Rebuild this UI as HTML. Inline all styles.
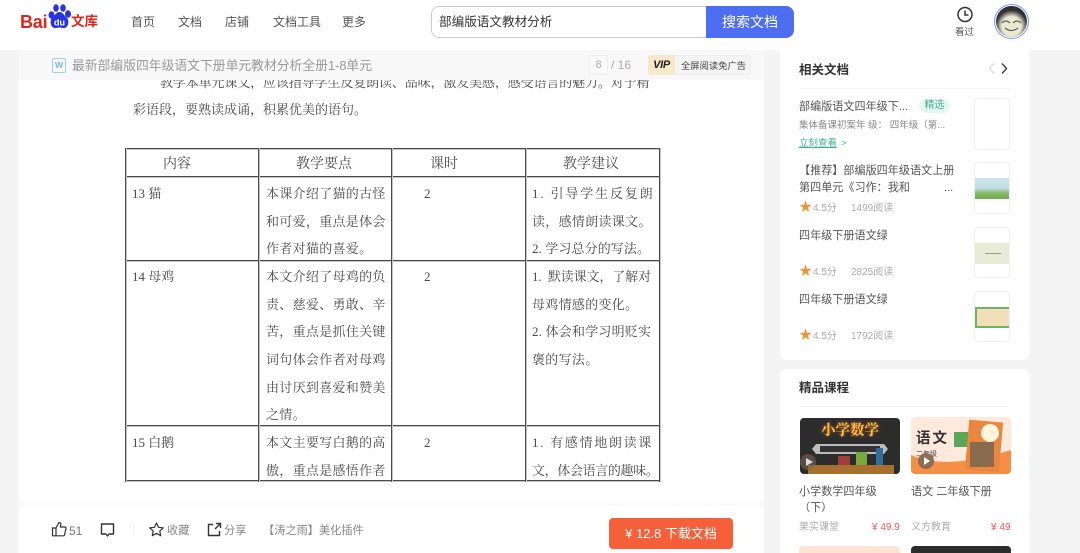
<!DOCTYPE html>
<html lang="zh"><head><meta charset="utf-8"><style>
html,body{margin:0;padding:0}
body{width:1080px;height:553px;overflow:hidden;position:relative;background:#f4f4f4;font-family:"Liberation Sans","Noto Sans CJK SC",sans-serif;color:#333}
div,span,svg{position:absolute;box-sizing:border-box}
.t{white-space:nowrap;line-height:16px}
.s{font-family:"Liberation Serif","Noto Serif CJK SC",serif;color:#4a4a4a;font-size:13px;white-space:nowrap;line-height:16px}
.h{background:#4a4a4a;box-shadow:0 1px 0 #c5c5c5}
.v{background:#4a4a4a;box-shadow:1px 0 0 #c5c5c5}
.th{width:31px;height:52px;left:974px;border:1px solid #f0f0f0;border-radius:4px;background:#fff;overflow:hidden}
.g{color:#aaa;font-size:10px}
.r{font-size:11.100px;color:#555}
.star{font-size:13px;color:#f59138;left:799px}
</style></head><body>
<div style="left:0;top:0;width:1080px;height:50px;background:#fff"></div>
<div class="t" style="left:20px;top:14px;font-size:18px;font-weight:700;color:#e1261c;letter-spacing:-.2px">Bai</div>
<svg style="left:46px;top:3px" width="27" height="27" viewBox="0 0 27 27"><g fill="#2932e1"><ellipse cx="5.500" cy="12" rx="3" ry="3.800"/><ellipse cx="10" cy="5" rx="2.800" ry="3.800"/><ellipse cx="17" cy="5" rx="2.800" ry="3.800"/><ellipse cx="22" cy="11" rx="3" ry="3.800"/><path d="M13.500 9c-3.500 0-4.500 3.500-7 5.500-3 2.500-2.500 9.500 2 10.500 2 .4 3.500-.5 5-.5s3 .9 5 .5c4.500-1 5-8 2-10.500-2.500-2-3.500-5.500-7-5.500z"/></g><text x="13.500" y="22.500" font-size="9" font-weight="700" fill="#fff" text-anchor="middle" font-family="Liberation Sans">du</text></svg>
<div class="t" style="left:71px;top:14px;font-size:13.500px;font-weight:700;color:#e1261c">文库</div>
<div class="t" style="left:131px;top:14px;font-size:12px;color:#555">首页</div>
<div class="t" style="left:178px;top:14px;font-size:12px;color:#555">文档</div>
<div class="t" style="left:225px;top:14px;font-size:12px;color:#555">店铺</div>
<div class="t" style="left:273px;top:14px;font-size:12px;color:#555">文档工具</div>
<div class="t" style="left:342px;top:14px;font-size:12px;color:#555">更多</div>
<div style="left:431px;top:6px;width:280px;height:32px;border:1px solid #c9ccd6;border-radius:8px 0 0 8px;background:#fff"></div>
<div class="t" style="left:439px;top:14px;font-size:12.600px;color:#333">部编版语文教材分析</div>
<div class="t" style="left:706px;top:6px;width:88px;height:32px;background:#4e6ef2;border-radius:0 8px 8px 0;color:#fff;font-size:14px;line-height:33px;text-align:center">搜索文档</div>
<svg style="left:956px;top:6px" width="18" height="18" viewBox="0 0 18 18" fill="none" stroke="#333" stroke-width="1.500"><circle cx="9" cy="8.500" r="7"/><path d="M9 4.500V9H12.500"/></svg>
<div class="t" style="left:955px;top:25px;font-size:9.500px;color:#555">看过</div>
<div style="left:994px;top:4px;width:35px;height:35px;border-radius:50%;border:1px solid #7f95f0;background:#fff"></div>
<div style="left:996px;top:6px;width:31px;height:31px;border-radius:50%;background:radial-gradient(circle at 50% 65%,#e9e8d0 0,#e9e8d0 38%,#333 62%,#222 100%);overflow:hidden"></div>
<svg style="left:1000px;top:16px" width="23" height="18" viewBox="0 0 23 18" fill="none" stroke="#444" stroke-width="1"><path d="M2 7q4-4 8 0M13 7q4-4 8 0M5 12q6 5 13 0"/></svg>

<div style="left:19px;top:50px;width:745px;height:503px;background:#fff"></div>
<div style="left:19px;top:50px;width:745px;height:30px;background:#f8f8f8"></div>
<div style="left:52px;top:58px;width:14px;height:15px;border:1px solid #9fcdf0;border-radius:2px;color:#76b5e8;font-size:8.500px;line-height:13px;text-align:center;font-weight:700">W</div>
<div class="t" style="left:72px;top:58px;font-size:12.800px;color:#999">最新部编版四年级语文下册单元教材分析全册1-8单元</div>
<div class="t" style="left:589px;top:55px;width:19px;height:20px;border:1px solid #eee;background:#fafafa;color:#aaa;font-size:11px;line-height:18px;text-align:center">8</div>
<div class="t" style="left:611px;top:57px;font-size:12px;color:#aaa">/ 16</div>
<div style="left:648px;top:55px;width:103px;height:20px;background:#f4f4f4;border:1px solid #eee;border-radius:3px"></div>
<div class="t" style="left:648px;top:55px;width:27px;height:20px;background:#f5e9c9;border-radius:3px 0 0 3px;font-size:11px;font-weight:700;font-style:italic;line-height:20px;text-align:center;color:#222;letter-spacing:-.3px">VIP</div>
<div class="t" style="left:681px;top:58px;font-size:9.300px;color:#444">全屏阅读免广告</div>

<div style="left:19px;top:80px;width:745px;height:9px;overflow:hidden"><div class="s" style="left:141px;top:-5px;letter-spacing:-.12px">教学本单元课文，应该指导学生反复朗读、品味，激发美感，感受语言的魅力。对于精</div></div>
<div class="s" style="left:133px;top:102px">彩语段，要熟读成诵，积累优美的语句。</div>

<div class="h" style="left:125px;top:148px;width:535px;height:1px"></div>
<div class="h" style="left:125px;top:176px;width:535px;height:1px"></div>
<div class="h" style="left:125px;top:260px;width:535px;height:1px"></div>
<div class="h" style="left:125px;top:425px;width:535px;height:1px"></div>
<div class="h" style="left:125px;top:480px;width:535px;height:1px"></div>
<div class="v" style="left:125px;top:148px;width:1px;height:334px"></div>
<div class="v" style="left:258px;top:148px;width:1px;height:334px"></div>
<div class="v" style="left:391px;top:148px;width:1px;height:334px"></div>
<div class="v" style="left:525px;top:148px;width:1px;height:334px"></div>
<div class="v" style="left:659px;top:148px;width:1px;height:334px"></div>

<div class="s" style="left:163px;top:157px;font-size:14px">内容</div>
<div class="s" style="left:296px;top:157px;font-size:14px">教学要点</div>
<div class="s" style="left:430px;top:157px;font-size:14px">课时</div>
<div class="s" style="left:563px;top:157px;font-size:14px">教学建议</div>

<div class="s" style="left:132px;top:186px">13 猫</div>
<div class="s" style="left:132px;top:269px">14 母鸡</div>
<div class="s" style="left:132px;top:435px">15 白鹅</div>
<div class="s" style="left:424px;top:186px">2</div>
<div class="s" style="left:424px;top:269px">2</div>
<div class="s" style="left:424px;top:435px">2</div>

<div class="s" style="left:266px;top:186px;letter-spacing:.3px">本课介绍了猫的古怪</div>
<div class="s" style="left:266px;top:214px;letter-spacing:.3px">和可爱，重点是体会</div>
<div class="s" style="left:266px;top:241px;letter-spacing:.3px">作者对猫的喜爱。</div>
<div class="s" style="left:266px;top:269px;letter-spacing:.3px">本文介绍了母鸡的负</div>
<div class="s" style="left:266px;top:297px;letter-spacing:.3px">责、慈爱、勇敢、辛</div>
<div class="s" style="left:266px;top:324px;letter-spacing:.3px">苦，重点是抓住关键</div>
<div class="s" style="left:266px;top:352px;letter-spacing:.3px">词句体会作者对母鸡</div>
<div class="s" style="left:266px;top:380px;letter-spacing:.3px">由讨厌到喜爱和赞美</div>
<div class="s" style="left:266px;top:407px;letter-spacing:.3px">之情。</div>
<div class="s" style="left:266px;top:435px;letter-spacing:.3px">本文主要写白鹅的高</div>
<div class="s" style="left:266px;top:463px;letter-spacing:.3px">傲，重点是感悟作者</div>

<div class="s" style="left:532px;top:186px;letter-spacing:1.850px">1. 引导学生反复朗</div>
<div class="s" style="left:532px;top:214px;letter-spacing:.3px">读，感情朗读课文。</div>
<div class="s" style="left:532px;top:241px;letter-spacing:.1px">2. 学习总分的写法。</div>
<div class="s" style="left:532px;top:269px;letter-spacing:-.1px">1.&nbsp; 默读课文，了解对</div>
<div class="s" style="left:532px;top:297px;letter-spacing:.3px">母鸡情感的变化。</div>
<div class="s" style="left:532px;top:324px;letter-spacing:.2px">2. 体会和学习明贬实</div>
<div class="s" style="left:532px;top:352px;letter-spacing:.3px">褒的写法。</div>
<div class="s" style="left:532px;top:435px;letter-spacing:1.700px">1. 有感情地朗读课</div>
<div class="s" style="left:532px;top:463px;letter-spacing:-.35px">文，体会语言的趣味。</div>

<div style="left:19px;top:503px;width:745px;height:50px;background:#fff;border-top:2px solid #f7f7f7"></div>
<svg style="left:51px;top:521px" width="16" height="16" viewBox="0 0 16 16" fill="none" stroke="#333" stroke-width="1.200"><path d="M5 7L8 1.500c1.500 0 2 1 1.800 2.200L9.400 6H14c.8 0 1.200 .7 1 1.400L13.500 14c-.1 .5-.5 .8-1 .8H5zM5 7H1.500v7.800H5"/></svg>
<div class="t" style="left:69px;top:523px;font-size:12px;color:#777">51</div>
<svg style="left:100px;top:523px" width="15" height="15" viewBox="0 0 15 15" fill="none" stroke="#333" stroke-width="1.400"><path d="M1.500 1h12v10H9l-1.500 2L6 11H1.500z" stroke-linejoin="round"/></svg>
<div style="left:133px;top:524px;width:1px;height:11px;background:#eee"></div>
<svg style="left:149px;top:522px" width="15" height="15" viewBox="0 0 15 15" fill="none" stroke="#333" stroke-width="1.200"><path d="M7.500 1l2 4.300 4.700 .6-3.400 3.200 .9 4.600-4.200-2.300-4.200 2.300 .9-4.600L.8 5.900l4.700-.6z" stroke-linejoin="round"/></svg>
<div class="t" style="left:167px;top:523px;font-size:11.200px;color:#888">收藏</div>
<svg style="left:207px;top:522px" width="15" height="15" viewBox="0 0 15 15" fill="none" stroke="#333" stroke-width="1.400"><path d="M6 2.500H1.500v11h11V9M8 7l5-5M9 1.500h4.500V6"/></svg>
<div class="t" style="left:224px;top:523px;font-size:11.200px;color:#888">分享</div>
<div class="t" style="left:263px;top:523px;font-size:11.200px;color:#888">【涛之雨】美化插件</div>
<div class="t" style="left:609px;top:518px;width:124px;height:31px;background:#f5603a;border-radius:4px;color:#fff;font-size:13px;font-weight:400;line-height:32px;text-align:center">¥ 12.8 下载文档</div>

<div style="left:780px;top:50px;width:249px;height:310px;background:#fff;border-radius:0 0 6px 6px"></div>
<div class="t" style="left:799px;top:62px;font-size:12.500px;font-weight:700;color:#333">相关文档</div>
<svg style="left:987px;top:62px" width="24" height="13" viewBox="0 0 24 13" fill="none" stroke-width="1.500"><path d="M7 1.500L2.500 6.500 7 11.500" stroke="#ddd"/><path d="M15 1.500L19.500 6.500 15 11.500" stroke="#444"/></svg>
<div style="left:799px;top:88px;width:211px;height:1px;background:#f5f5f5"></div>
<div class="t r" style="left:799px;top:99px">部编版语文四年级下...</div>
<div class="t" style="left:919px;top:99px;width:31px;height:14px;border-radius:7px;background:#e6f6f0;color:#3cb58a;font-size:10px;line-height:14px;text-align:center">精选</div>
<div class="t" style="left:799px;top:118px;font-size:9.500px;color:#888">集体备课初案年 级： 四年级（第...</div>
<div class="t" style="left:799px;top:136px;font-size:9.500px;color:#3cb58a;text-decoration:underline">立刻查看</div>
<div class="t" style="left:841px;top:136px;font-size:9.500px;color:#3cb58a">&gt;</div>
<div class="th" style="top:98px;width:36px;height:52px"></div>

<div class="t r" style="left:799px;top:163px">【推荐】部编版四年级语文上册</div>
<div class="t r" style="left:799px;top:180px">第四单元《习作：我和</div>
<div class="t r" style="left:944px;top:180px">...</div>
<div class="th" style="top:162px;width:36px;height:52px"><div style="left:0;top:15px;width:36px;height:21px;background:linear-gradient(#cfe6ee 0,#bcdde0 50%,#8dbb6a 70%,#6da84f 100%)"></div></div>
<div class="t star" style="top:199px">★</div>
<div class="t g" style="left:813px;top:201px">4.5分</div>
<div class="t g" style="left:851px;top:201px">1499阅读</div>

<div class="t r" style="left:799px;top:228px">四年级下册语文绿</div>
<div class="th" style="top:227px;width:36px;height:51px"><div style="left:0;top:15px;width:36px;height:21px;background:#e8ecd4"></div><div style="left:10px;top:25px;width:16px;height:1px;background:#999"></div></div>
<div class="t star" style="top:263px">★</div>
<div class="t g" style="left:813px;top:265px">4.5分</div>
<div class="t g" style="left:851px;top:265px">2825阅读</div>

<div class="t r" style="left:799px;top:292px">四年级下册语文绿</div>
<div class="th" style="top:291px;width:36px;height:51px"><div style="left:0;top:15px;width:36px;height:21px;background:#f1dfba;border:2px solid #6fb562"></div></div>
<div class="t star" style="top:327px">★</div>
<div class="t g" style="left:813px;top:329px">4.5分</div>
<div class="t g" style="left:851px;top:329px">1792阅读</div>

<div style="left:780px;top:369px;width:249px;height:184px;background:#fff;border-radius:6px 6px 0 0"></div>
<div class="t" style="left:799px;top:380px;font-size:12.500px;font-weight:700;color:#333">精品课程</div>
<div style="left:799px;top:406px;width:211px;height:1px;background:#f5f5f5"></div>

<div style="left:800px;top:418px;width:100px;height:56px;border-radius:4px;background:#2c2c2c;overflow:hidden">
<div class="t" style="left:21px;top:5px;font-size:14.500px;font-weight:700;color:#f8c34a;text-shadow:0 0 3px #e8691c;font-family:'Liberation Sans','Noto Serif CJK SC',serif">小学数学</div>
<svg style="left:0;top:0" width="100" height="56"><path d="M12 31l4-5h68l4 5-4 5H16z" fill="#bbb"/><path d="M20 28h60v6H20z" fill="#333"/></svg>
<div style="left:8px;top:47px;width:86px;height:9px;background:#a8702f"></div>
<div style="left:38px;top:38px;width:12px;height:9px;background:#a33d3a"></div>
<div style="left:56px;top:34px;width:11px;height:13px;background:#7ba83a"></div>
<div style="left:76px;top:30px;width:7px;height:17px;background:#2f6f9f"></div>
<div style="left:0;top:36px;width:16px;height:16px;border-radius:50%;background:rgba(120,100,80,.6)"></div>
<div style="left:6px;top:40px;width:0;height:0;border-left:7px solid #ddd;border-top:4px solid transparent;border-bottom:4px solid transparent"></div>
</div>
<div style="left:911px;top:417px;width:100px;height:57px;border-radius:4px;background:#ffe9dc;overflow:hidden">
<svg style="left:0;top:0" width="100" height="57"><path d="M0 38q35 16 100-5V57H0z" fill="#f58f45"/></svg>
<div class="t" style="left:5px;top:14px;font-size:14.500px;font-weight:700;color:#333;letter-spacing:2px">语文</div>
<div style="left:43px;top:15px;width:14px;height:15px;background:#5aa75a"></div>
<div class="t" style="left:5px;top:30px;font-size:7px;color:#444">二年级</div>
<div style="left:56px;top:4px;width:34px;height:50px;background:#e8873d;transform:rotate(5deg)"></div>
<div style="left:70px;top:7px;width:18px;height:18px;border-radius:50%;background:#fff3d9"></div>
<div style="left:59px;top:25px;width:24px;height:25px;background:#8a6b4e"></div>
<div style="left:7px;top:36px;width:16px;height:16px;border-radius:50%;background:#8d6e55"></div>
<div style="left:13px;top:40px;width:0;height:0;border-left:6px solid #fff;border-top:4px solid transparent;border-bottom:4px solid transparent"></div>
</div>

<div class="t r" style="left:799px;top:484px">小学数学四年级</div>
<div class="t r" style="left:799px;top:500px">（下）</div>
<div class="t r" style="left:911px;top:484px">语文 二年级下册</div>
<div class="t g" style="left:799px;top:520px">果实课堂</div>
<div class="t" style="left:872px;top:520px;font-size:10px;color:#f0555a">¥ 49.9</div>
<div class="t g" style="left:911px;top:520px">义方教育</div>
<div class="t" style="left:991px;top:520px;font-size:10px;color:#f0555a">¥ 49</div>
<div style="left:799px;top:546px;width:101px;height:7px;background:#fde4d4;border-radius:4px 4px 0 0"></div>
<div style="left:911px;top:546px;width:100px;height:7px;background:#2c2c2c;border-radius:4px 4px 0 0"></div>
</body></html>
